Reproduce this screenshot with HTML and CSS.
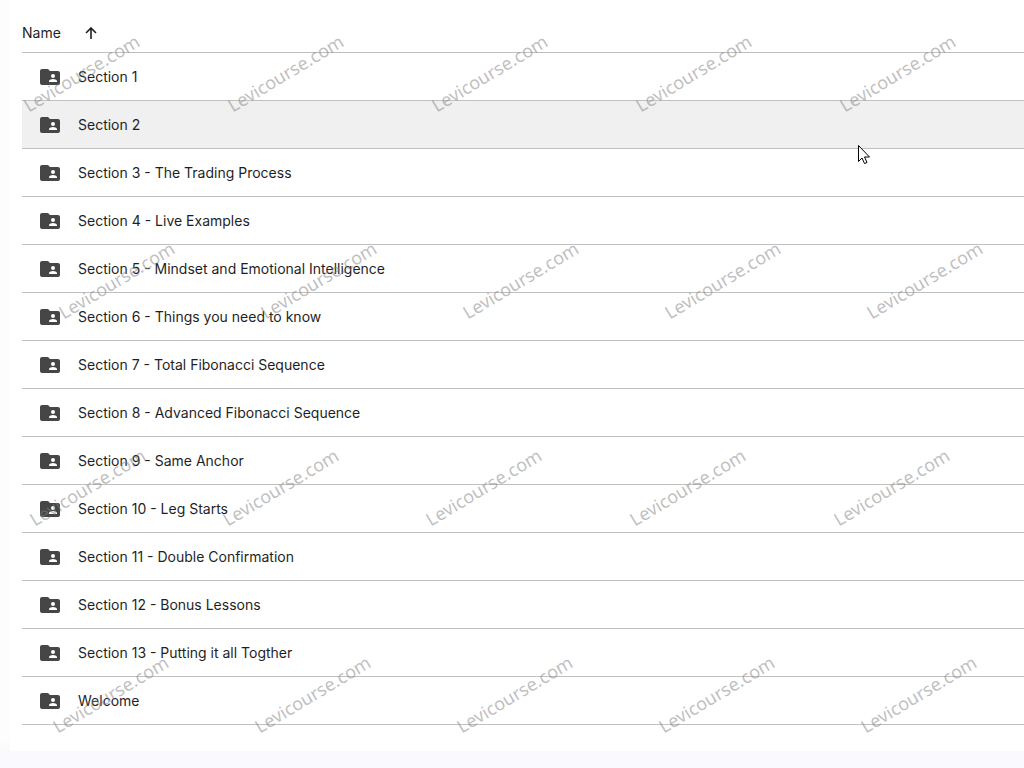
FILE: index.html
```
<!DOCTYPE html>
<html lang="en">
<head>
    <meta charset="UTF-8">
    <meta name="viewport" content="width=device-width, initial-scale=1.0">
    <title>Sections</title>
    <link rel="stylesheet" href="styles.css">
</head>
<body>
    <!-- Shared folder icon -->
    <svg class="sprite" aria-hidden="true">
        <symbol id="folder" viewBox="0 0 20 16">
            <path fill="#444746" d="M2 0h6l2 2h8a2 2 0 0 1 2 2v10a2 2 0 0 1-2 2H2a2 2 0 0 1-2-2V2a2 2 0 0 1 2-2z"/>
            <circle fill="#fff" cx="13" cy="7" r="2"/>
            <path fill="#fff" d="M9 13v-1c0-1.300 2.600-2 4-2s4 .7 4 2v1z"/>
        </symbol>
    </svg>

    <main class="panel">
        <table class="files">
            <thead>
                <tr>
                    <th>
                        <button class="sort" type="button">
                            Name
                            <svg class="arrow" viewBox="0 0 12 12" aria-hidden="true">
                                <path d="M6 12V1M1 6l5-5 5 5"/>
                            </svg>
                        </button>
                    </th>
                </tr>
            </thead>
            <tbody>
                <tr><td><a class="file" href="#"><svg class="folder"><use href="#folder"/></svg>Section 1</a></td></tr>
                <tr class="active"><td><a class="file" href="#"><svg class="folder"><use href="#folder"/></svg>Section 2</a></td></tr>
                <tr><td><a class="file" href="#"><svg class="folder"><use href="#folder"/></svg>Section 3 - The Trading Process</a></td></tr>
                <tr><td><a class="file" href="#"><svg class="folder"><use href="#folder"/></svg>Section 4 - Live Examples</a></td></tr>
                <tr><td><a class="file" href="#"><svg class="folder"><use href="#folder"/></svg>Section 5 - Mindset and Emotional Intelligence</a></td></tr>
                <tr><td><a class="file" href="#"><svg class="folder"><use href="#folder"/></svg>Section 6 - Things you need to know</a></td></tr>
                <tr><td><a class="file" href="#"><svg class="folder"><use href="#folder"/></svg>Section 7 - Total Fibonacci Sequence</a></td></tr>
                <tr><td><a class="file" href="#"><svg class="folder"><use href="#folder"/></svg>Section 8 - Advanced Fibonacci Sequence</a></td></tr>
                <tr><td><a class="file" href="#"><svg class="folder"><use href="#folder"/></svg>Section 9 - Same Anchor</a></td></tr>
                <tr><td><a class="file" href="#"><svg class="folder"><use href="#folder"/></svg>Section 10 - Leg Starts</a></td></tr>
                <tr><td><a class="file" href="#"><svg class="folder"><use href="#folder"/></svg>Section 11 - Double Confirmation</a></td></tr>
                <tr><td><a class="file" href="#"><svg class="folder"><use href="#folder"/></svg>Section 12 - Bonus Lessons</a></td></tr>
                <tr><td><a class="file" href="#"><svg class="folder"><use href="#folder"/></svg>Section 13 - Putting it all Togther</a></td></tr>
                <tr><td><a class="file" href="#"><svg class="folder"><use href="#folder"/></svg>Welcome</a></td></tr>
            </tbody>
        </table>
    </main>

    <!-- Watermark and pointer lie over the list -->
    <svg class="overlay">
        <g class="watermark">
            <text transform="translate(85 79) rotate(-31)">Levicourse.com</text>
            <text transform="translate(289 79) rotate(-31)">Levicourse.com</text>
            <text transform="translate(493 79) rotate(-31)">Levicourse.com</text>
            <text transform="translate(697 79) rotate(-31)">Levicourse.com</text>
            <text transform="translate(901 79) rotate(-31)">Levicourse.com</text>

            <text transform="translate(120 286) rotate(-31)">Levicourse.com</text>
            <text transform="translate(322 286) rotate(-31)">Levicourse.com</text>
            <text transform="translate(524 286) rotate(-31)">Levicourse.com</text>
            <text transform="translate(726 286) rotate(-31)">Levicourse.com</text>
            <text transform="translate(928 286) rotate(-31)">Levicourse.com</text>

            <text transform="translate(91 493) rotate(-31)">Levicourse.com</text>
            <text transform="translate(284 493) rotate(-31)">Levicourse.com</text>
            <text transform="translate(487 493) rotate(-31)">Levicourse.com</text>
            <text transform="translate(691 493) rotate(-31)">Levicourse.com</text>
            <text transform="translate(895 493) rotate(-31)">Levicourse.com</text>

            <text transform="translate(114 700) rotate(-31)">Levicourse.com</text>
            <text transform="translate(316 700) rotate(-31)">Levicourse.com</text>
            <text transform="translate(518 700) rotate(-31)">Levicourse.com</text>
            <text transform="translate(720 700) rotate(-31)">Levicourse.com</text>
            <text transform="translate(922 700) rotate(-31)">Levicourse.com</text>
        </g>
        <path class="pointer" d="M858.500 145.500v16l3.500-3.500 2.500 5.500 2.500-1-2.500-5.500h5z"/>
    </svg>
</body>
</html>
```
FILE: styles.css
```
/* General Styling */
* {
    box-sizing: border-box;
}

body {
    margin: 0;
    min-height: 100vh;
    padding-left: 10px;
    position: relative;
    background: linear-gradient(#fdfdfd 740px, #f9f9fe 752px);
    font-family: Inter, "Liberation Sans", sans-serif;
    font-size: 14px;
    line-height: 20px;
    color: #1f1f1f;
}

.sprite {
    position: absolute;
    width: 0;
    height: 0;
}

.panel {
    padding: 14px 0 26px 12px;
    background: #fff;
}

/* File list */
.files {
    width: 100%;
    border-spacing: 0;
}

.files th,
.files td {
    padding: 0;
    border-bottom: 1px solid #c0c0c0;
    text-align: left;
}

.files th {
    height: 39px;
}

.files .active {
    background: #f0f0f0;
}

.sort {
    display: flex;
    align-items: center;
    gap: 24px;
    padding: 0;
    border: none;
    background: none;
    font: inherit;
    font-weight: 400;
    color: inherit;
    cursor: pointer;
}

.arrow {
    width: 12px;
    height: 12px;
    fill: none;
    stroke: #1f1f1f;
    stroke-width: 1.600;
}

.file {
    display: flex;
    align-items: center;
    gap: 18px;
    height: 47px;
    padding-left: 18px;
    color: inherit;
    text-decoration: none;
}

.folder {
    width: 20px;
    height: 16px;
}

/* Overlay */
.overlay {
    position: absolute;
    top: 0;
    left: 0;
    width: 100%;
    height: 100%;
    pointer-events: none;
}

.watermark {
    font-family: "Noto Sans", sans-serif;
    font-size: 18px;
    text-anchor: middle;
    fill: #808080;
    fill-opacity: 0.5;
}

.pointer {
    fill: #fff;
    stroke: #000;
}
```
